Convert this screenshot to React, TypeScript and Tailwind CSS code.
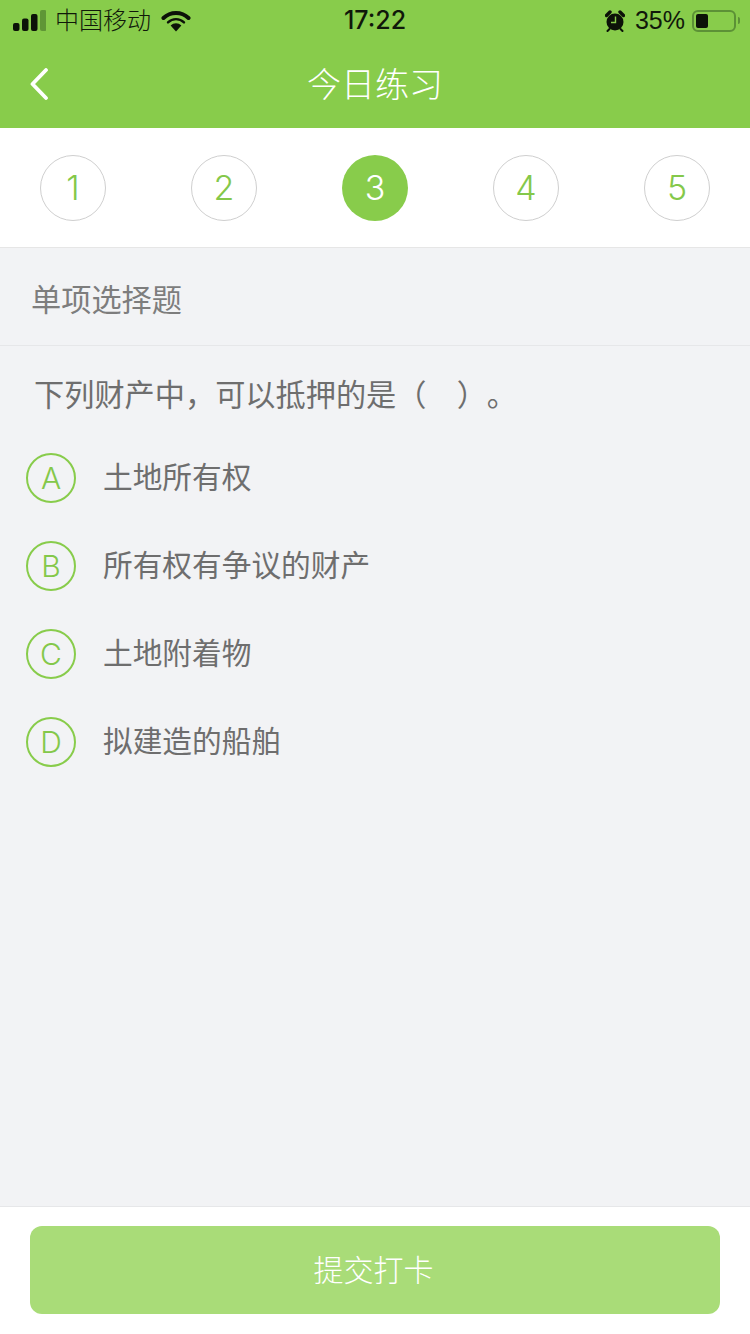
const FONT = "font-['Liberation_Sans','Noto_Sans_CJK_SC',sans-serif]";
const DIGIT_FONT = "font-['Inter','Liberation_Sans',sans-serif]";

const steps = [1, 2, 3, 4, 5];
const activeStep = 3;

const options = [
  { key: 'A', text: '土地所有权' },
  { key: 'B', text: '所有权有争议的财产' },
  { key: 'C', text: '土地附着物' },
  { key: 'D', text: '拟建造的船舶' },
];

function StatusBar() {
  return (
    <div className="grid h-[40px] grid-cols-3 items-center pt-[1px] text-[24px] leading-none text-[#10180a]">
      <div className="flex items-center pl-[13px]">
        {/* signal */}
        <svg width="33" height="22" viewBox="0 0 33 22" className="shrink-0">
          <rect x="0" y="13" width="6.5" height="8" rx="2" fill="#0c1208" />
          <rect x="9" y="8.5" width="6.5" height="12.5" rx="2" fill="#0c1208" />
          <rect x="18" y="4" width="6.5" height="17" rx="2" fill="#0c1208" />
          <rect x="27" y="0" width="6.5" height="21" rx="2" fill="#5f9636" />
        </svg>
        <span className="ml-[9px] font-light">中国移动</span>
        {/* wifi */}
        <svg width="30" height="22" viewBox="0 0 30 22" className="ml-[10px] shrink-0">
          <path d="M15 21.5 L9.6 15.4 A8 8 0 0 1 20.4 15.4 Z" fill="#0c1208" />
          <path d="M2.5 8 A18 18 0 0 1 27.5 8" fill="none" stroke="#0c1208" strokeWidth="4" strokeLinecap="round" />
          <path d="M7 12.4 A11.5 11.5 0 0 1 23 12.4" fill="none" stroke="#0c1208" strokeWidth="2.4" strokeLinecap="round" />
        </svg>
      </div>
      <div className={`text-center text-[25px] font-medium ${DIGIT_FONT}`}>17:22</div>
      <div className="flex items-center justify-end pr-[10px]">
        {/* alarm */}
        <svg width="20" height="22" viewBox="0 0 20 22" className="shrink-0">
          <circle cx="10" cy="12" r="8.5" fill="#0c1208" />
          <path d="M10.5 6.5 V12.5 H6" fill="none" stroke="#88cc4b" strokeWidth="1.4" />
          <path d="M1.5 5.5 L5 2 M15 2 L18.5 5.5" stroke="#0c1208" strokeWidth="3.4" strokeLinecap="round" />
          <path d="M4.5 19 L2.5 21 M15.5 19 L17.5 21" stroke="#0c1208" strokeWidth="2" strokeLinecap="round" />
        </svg>
        <span className="ml-[10px] text-[25px] font-light">35%</span>
        {/* battery */}
        <div className="ml-[7px] flex h-[22px] w-[44px] items-center rounded-[6px] border-2 border-[#5c9136] p-[2px]">
          <div className="h-full w-[12px] rounded-[2px] bg-[#0c1208]" />
        </div>
        <div className="ml-[2px] h-[7px] w-[2px] rounded-r-sm bg-[#5c9136]" />
      </div>
    </div>
  );
}

export default function App() {
  return (
    <div className={`flex h-[1334px] w-[750px] flex-col overflow-hidden bg-[#f2f3f5] ${FONT}`}>
      {/* Header */}
      <div className="h-[128px] shrink-0 bg-[#88cc4b]">
        <StatusBar />
        <div className="relative flex h-[88px] items-center justify-center pt-[2px]">
          <svg width="20" height="32" viewBox="0 0 20 32" className="absolute left-[29px] top-[28px]">
            <path d="M17 2 L3.5 16 L17 30" fill="none" stroke="#ffffff" strokeWidth="3.8" strokeLinecap="round" strokeLinejoin="round" />
          </svg>
          <span className="text-[34px] font-light leading-none text-white">今日练习</span>
        </div>
      </div>

      {/* Steps */}
      <div className={`flex h-[120px] shrink-0 items-start justify-between border-b border-[#e6e6e6] bg-white px-[40px] pt-[27px] ${DIGIT_FONT}`}>
        {steps.map((step) =>
          step === activeStep ? (
            <div key={step} className="flex h-[66px] w-[66px] items-center justify-center rounded-full bg-[#88cc4b] text-[34px] font-[350] leading-none text-white">
              {step}
            </div>
          ) : (
            <div key={step} className="flex h-[66px] w-[66px] items-center justify-center rounded-full border border-[#cfcfcf] bg-white text-[34px] font-[350] leading-none text-[#84c84a]">
              {step}
            </div>
          ),
        )}
      </div>

      {/* Section title */}
      <div className="flex h-[98px] shrink-0 items-center border-b border-[#e6e7e9] pl-[31px] pt-[10px] text-[30.2px] leading-none text-[#7d7d7d]">
        单项选择题
      </div>

      {/* Question */}
      <div className="flex-1">
        <div className="flex h-[107px] items-start pl-[34px] pt-[35px] text-[30.2px] leading-none text-[#6e6e6e] [text-spacing-trim:space-all]">
          下列财产中，可以抵押的是（&emsp;）。
        </div>
        <div className="flex flex-col gap-[38px] pl-[26px]">
          {options.map((option) => (
            <div key={option.key} className="flex items-center">
              <div className={`flex h-[50px] w-[50px] items-center justify-center rounded-full border-2 border-[#88cc4b] text-[30px] font-[350] leading-none text-[#84c84a] ${DIGIT_FONT}`}>
                {option.key}
              </div>
              <span className="ml-[27px] text-[29.7px] leading-none text-[#6e6e6e]">{option.text}</span>
            </div>
          ))}
        </div>
      </div>

      {/* Submit */}
      <div className="h-[128px] shrink-0 border-t border-[#e6e7e9] bg-white px-[30px] pt-[19px]">
        <button className="flex h-[88px] w-full items-center justify-center rounded-[12px] bg-[#a9dc78] pr-[3px] pt-[1px] text-[30px] font-light leading-none text-white">
          提交打卡
        </button>
      </div>
    </div>
  );
}
